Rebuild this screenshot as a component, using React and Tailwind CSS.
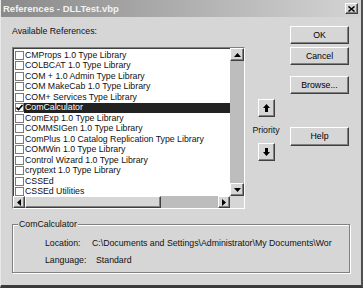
const raised =
  "border border-t-white border-l-white border-r-[#404040] border-b-[#404040] shadow-[inset_-1px_-1px_0_#808080] bg-[#d6d6d6]";
const sunken =
  "border border-t-[#808080] border-l-[#808080] border-r-white border-b-white shadow-[inset_1px_1px_0_#404040]";

const refs = [
  "CMProps 1.0 Type Library",
  "COLBCAT 1.0 Type Library",
  "COM + 1.0 Admin Type Library",
  "COM MakeCab 1.0 Type Library",
  "COM+ Services Type Library",
  "ComCalculator",
  "ComExp 1.0 Type Library",
  "COMMSIGen 1.0 Type Library",
  "ComPlus 1.0 Catalog Replication Type Library",
  "COMWin 1.0 Type Library",
  "Control Wizard 1.0 Type Library",
  "cryptext 1.0 Type Library",
  "CSSEd",
  "CSSEd Utilities",
];

const Tri = ({ dir }) => {
  const pts = {
    up: "0,4 3.5,0 7,4",
    down: "0,0 3.5,4 7,0",
    left: "4,0 0,3.5 4,7",
    right: "0,0 4,3.5 0,7",
  }[dir];
  const vertical = dir === "up" || dir === "down";
  return (
    <svg width={vertical ? 7 : 4} height={vertical ? 4 : 7} viewBox={vertical ? "0 0 7 4" : "0 0 4 7"}>
      <polygon points={pts} fill="#000" />
    </svg>
  );
};

const BigArrow = ({ down }) => (
  <svg width="7" height="8" viewBox="0 0 7 8" className={down ? "rotate-180" : ""}>
    <path d="M3.5 0 L7 4 H5 V8 H2 V4 H0 Z" fill="#000" />
  </svg>
);

const Button = ({ children, className = "" }) => (
  <div className={`${raised} flex items-center justify-center text-black ${className}`}>{children}</div>
);

const Row = ({ label, checked, selected }) => (
  <div className="flex items-center h-[10.5px] pl-[2px]">
    <div className="w-[9px] h-[9px] shrink-0 bg-white border border-[#7a7a7a] flex items-center justify-center">
      {checked && (
        <svg width="7" height="7" viewBox="0 0 7 7">
          <path d="M0.5 3.5 L2.5 5.5 L6.5 1" stroke="#000" strokeWidth="1.6" fill="none" />
        </svg>
      )}
    </div>
    <div
      className={`flex-1 h-full flex items-center pl-[1px] whitespace-nowrap ${
        selected ? "bg-[#222222] text-white" : "text-[#111]"
      }`}
    >
      {label}
    </div>
  </div>
);

export default function App() {
  return (
    <div
      className="w-[363px] h-[288px] bg-[#d6d6d6] border-l border-l-[#e8e8e8] border-r-2 border-r-[#505050] border-b-[3px] border-b-[#3a3a3a] flex flex-col overflow-hidden text-[8.75px] leading-[11px] text-[#111]"
      style={{ fontFamily: '"Liberation Sans", Arial, sans-serif' }}
    >
      {/* title bar */}
      <div className="h-[17px] shrink-0 flex items-center justify-between pl-[2px] pr-[3px] bg-gradient-to-r from-[#8a8a8a] to-[#d4d4d4]">
        <span className="font-bold text-[9.5px] text-[#f2f2f2]">References - DLLTest.vbp</span>
        <div className={`${raised} w-[13px] h-[11px] flex items-center justify-center`}>
          <svg width="7" height="6" viewBox="0 0 7 6">
            <path d="M0.5 0.5 L6.5 5.5 M6.5 0.5 L0.5 5.5" stroke="#000" strokeWidth="1.5" />
          </svg>
        </div>
      </div>

      <div className="flex pl-[11px]">
        {/* left: list */}
        <div className="w-[233px] flex flex-col">
          <div className="mt-[9px]">Available References:</div>
          <div className={`${sunken} mt-[10px] h-[162px] bg-white flex flex-col`}>
            <div className="flex h-[148px]">
              <div className="flex-1 pt-[2px] overflow-hidden">
                {refs.map((r) => (
                  <Row key={r} label={r} checked={r === "ComCalculator"} selected={r === "ComCalculator"} />
                ))}
              </div>
              <div className="w-[14px] flex flex-col bg-[#bdbdbd]">
                <Button className="h-[13px]">
                  <Tri dir="up" />
                </Button>
                <div className="flex-1" />
                <Button className="h-[13px]">
                  <Tri dir="down" />
                </Button>
              </div>
            </div>
            <div className="flex h-[12px]">
              <Button className="w-[12px]">
                <Tri dir="left" />
              </Button>
              <Button className="w-[136px]" />
              <div className="flex-1 bg-[#bdbdbd]" />
              <Button className="w-[12px]">
                <Tri dir="right" />
              </Button>
              <div className="w-[14px] bg-[#d6d6d6]" />
            </div>
          </div>
        </div>

        {/* priority */}
        <div className="ml-[6px] w-[30px] flex flex-col items-center">
          <Button className="mt-[82px] w-[17px] h-[18px]">
            <BigArrow />
          </Button>
          <div className="mt-[8px] h-[11px]">Priority</div>
          <Button className="mt-[7px] w-[17px] h-[18px]">
            <BigArrow down />
          </Button>
        </div>

        {/* buttons */}
        <div className="ml-[9px] w-[59px] flex flex-col">
          <Button className="mt-[9px] h-[18px]">OK</Button>
          <Button className="mt-[3px] h-[18px]">Cancel</Button>
          <Button className="mt-[11px] h-[18px]">Browse...</Button>
          <Button className="mt-[33px] h-[19px]">Help</Button>
        </div>
      </div>

      {/* group box */}
      <div className="relative ml-[11px] mt-[15px] w-[338px] h-[49px] border border-[#808080] shadow-[inset_1px_1px_0_#fff,1px_1px_0_#fff]">
        <span className="absolute -top-[6px] left-[5px] px-[1px] bg-[#d6d6d6]">ComCalculator</span>
        <div className="pt-[13px] pl-[32px] flex flex-col gap-[6px]">
          <div className="flex whitespace-nowrap">
            <span className="w-[47px]">Location:</span>
            <span>C:\Documents and Settings\Administrator\My Documents\Wor</span>
          </div>
          <div className="flex whitespace-nowrap">
            <span className="w-[51px]">Language:</span>
            <span>Standard</span>
          </div>
        </div>
      </div>
    </div>
  );
}
